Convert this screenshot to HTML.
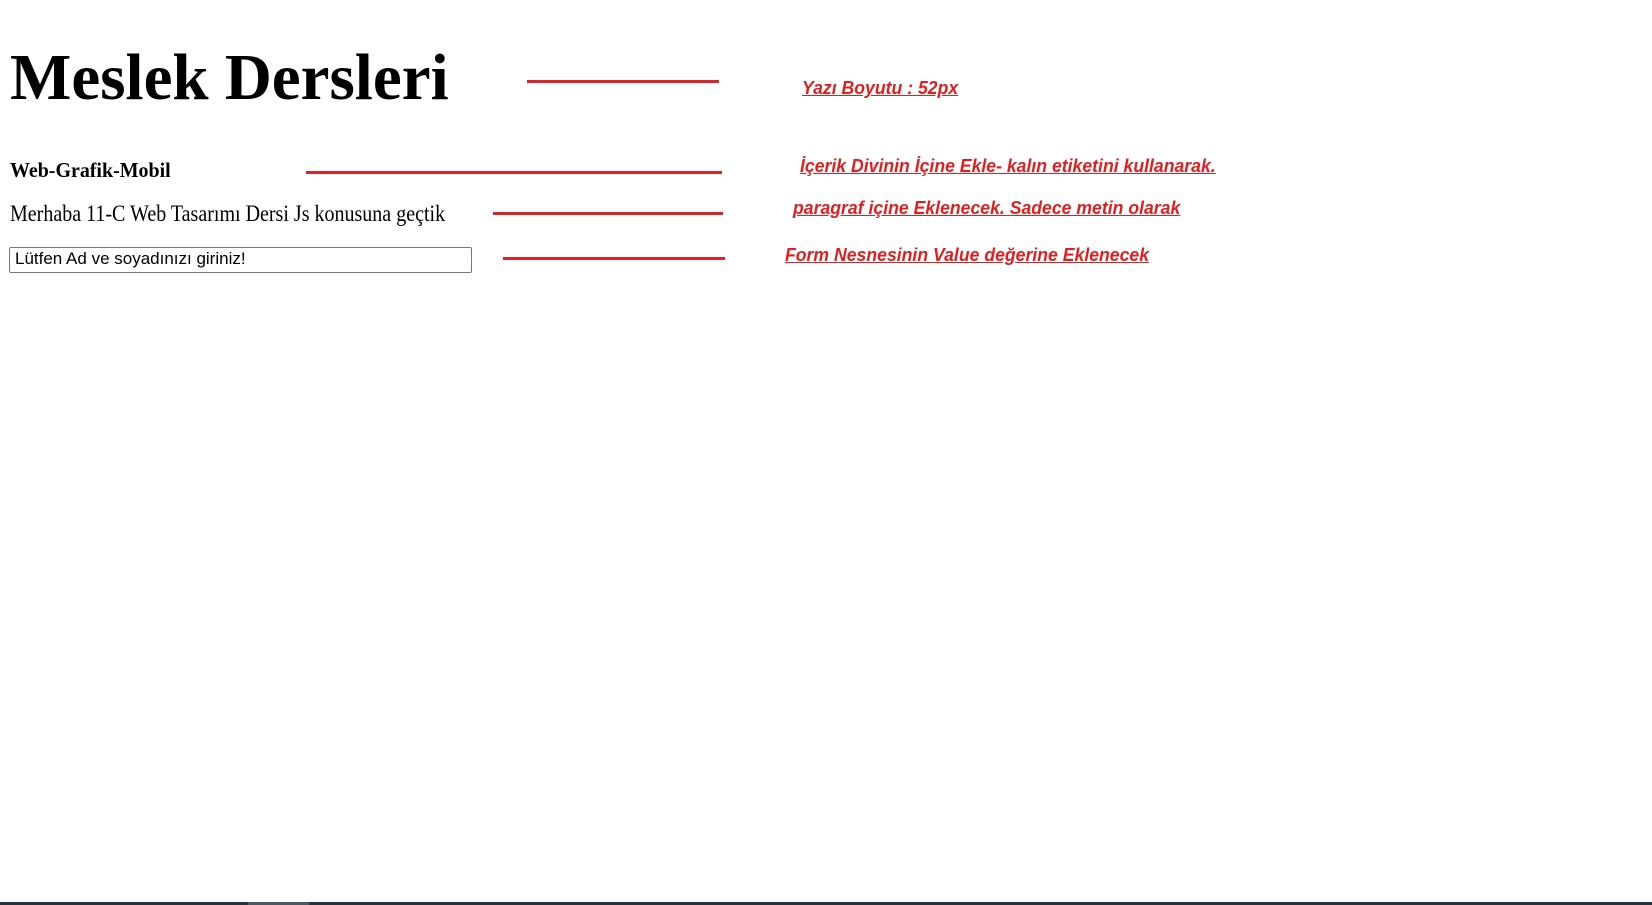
<!DOCTYPE html>
<html><head><meta charset="utf-8"><style>
html,body{margin:0;padding:0;background:#fff;width:1652px;height:905px;overflow:hidden;position:relative}
.a{position:absolute;white-space:nowrap;line-height:1;transform-origin:0 0}
.s{font-family:"Liberation Serif",serif;color:#000}
.n{font-family:"Liberation Sans",sans-serif;color:#e02020;font-weight:bold;font-style:italic;text-decoration:underline;font-size:18px;transform:scaleX(0.98)}
.l{position:absolute;height:3px;background:#dc2328}
</style></head><body>
<div class="a s" style="left:10px;top:45px;font-size:66px;font-weight:bold;transform:scaleX(0.985)">Meslek Dersleri</div>
<div class="a s" style="left:10px;top:160px;font-size:21px;font-weight:bold;transform:scaleX(0.95)">Web-Grafik-Mobil</div>
<div class="a s" style="left:10px;top:202px;font-size:23px;transform:scaleX(0.87)">Merhaba 11-C Web Tasarımı Dersi Js konusuna geçtik</div>
<div style="position:absolute;left:9px;top:247px;width:461px;height:24px;border:1px solid #767676;border-radius:2px"></div>
<div class="a" style="left:15px;top:250px;font-family:'Liberation Sans',sans-serif;font-size:17px;color:#000">Lütfen Ad ve soyadınızı giriniz!</div>
<div class="l" style="left:527px;top:80px;width:192px"></div>
<div class="l" style="left:306px;top:171px;width:416px"></div>
<div class="l" style="left:493px;top:212px;width:230px"></div>
<div class="l" style="left:503px;top:257px;width:222px"></div>
<div class="a n" style="left:802px;top:79px">Yazı Boyutu : 52px</div>
<div class="a n" style="left:800px;top:157px">İçerik Divinin İçine Ekle- kalın etiketini kullanarak.</div>
<div class="a n" style="left:793px;top:199px">paragraf içine Eklenecek. Sadece metin olarak</div>
<div class="a n" style="left:785px;top:246px">Form Nesnesinin Value değerine Eklenecek</div>
<div style="position:absolute;left:0;top:902px;width:1652px;height:3px;background:#24343a"></div>
<div style="position:absolute;left:248px;top:902px;width:61px;height:3px;background:#4a5a60"></div>
</body></html>
